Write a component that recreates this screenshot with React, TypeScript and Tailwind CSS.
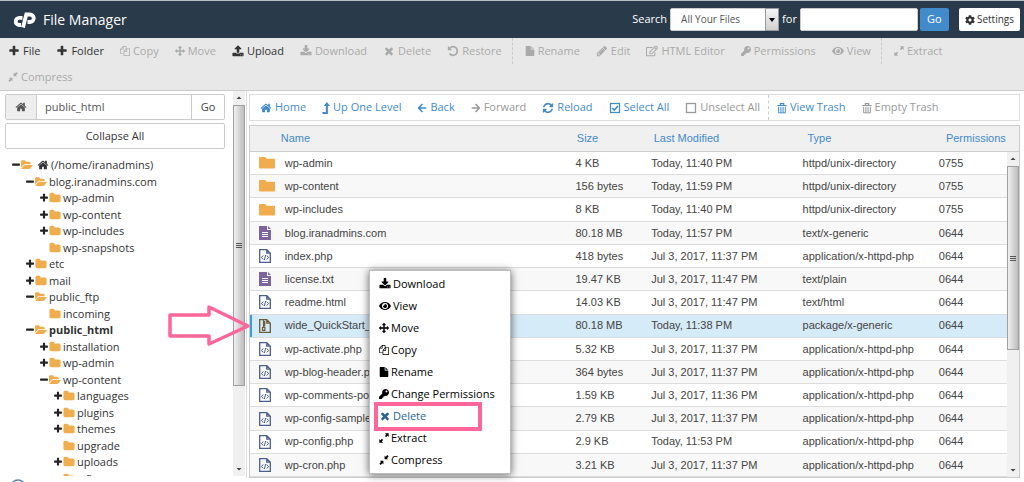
import type { ReactNode } from 'react'
import { FaArrowLeft, FaArrowRight, FaCog, FaEye, FaKey, FaRegEdit } from 'react-icons/fa'

const paths = {
  plus: 'M1600 736v192q0 40-28 68t-68 28h-416v416q0 40-28 68t-68 28h-192q-40 0-68-28t-28-68v-416h-416q-40 0-68-28t-28-68v-192q0-40 28-68t68-28h416v-416q0-40 28-68t68-28h192q40 0 68 28t28 68v416h416q40 0 68 28t28 68z',
  minus: 'M1600 736v192q0 40-28 68t-68 28h-1216q-40 0-68-28t-28-68v-192q0-40 28-68t68-28h1216q40 0 68 28t28 68z',
  home: 'M1472 992v480q0 26-19 45t-45 19h-384v-384h-256v384h-384q-26 0-45-19t-19-45v-480q0-1 .5-3t.5-3l575-474 575 474q1 2 1 6zm223-69l-62 74q-8 9-21 11h-3q-13 0-21-7l-692-577-692 577q-12 8-24 7-13-2-21-11l-62-74q-8-10-7-23.5t11-21.5l719-599q32-26 76-26t76 26l244 204v-195q0-14 9-23t23-9h192q14 0 23 9t9 23v408l219 182q10 8 11 21.5t-7 23.5z',
  download: 'M1344 1344q0-26-19-45t-45-19-45 19-19 45 19 45 45 19 45-19 19-45zm256 0q0-26-19-45t-45-19-45 19-19 45 19 45 45 19 45-19 19-45zm128-224v320q0 40-28 68t-68 28h-1472q-40 0-68-28t-28-68v-320q0-40 28-68t68-28h465l135 136q58 56 136 56t136-56l136-136h464q40 0 68 28t28 68zm-325-569q17 41-14 70l-448 448q-18 19-45 19t-45-19l-448-448q-31-29-14-70 17-39 59-39h256v-448q0-26 19-45t45-19h256q26 0 45 19t19 45v448h256q42 0 59 39z',
  upload: 'M1344 1472q0-26-19-45t-45-19-45 19-19 45 19 45 45 19 45-19 19-45zm256 0q0-26-19-45t-45-19-45 19-19 45 19 45 45 19 45-19 19-45zm128-224v320q0 40-28 68t-68 28h-1472q-40 0-68-28t-28-68v-320q0-40 28-68t68-28h427q21 56 70.5 92t110.5 36h256q61 0 110.5-36t70.5-92h427q40 0 68 28t28 68zm-325-648q-17 40-59 40h-256v448q0 26-19 45t-45 19h-256q-26 0-45-19t-19-45v-448h-256q-42 0-59-40-17-39 14-69l448-448q18-19 45-19t45 19l448 448q31 30 14 69z',
  times: 'M1490 1322q0 40-28 68l-136 136q-28 28-68 28t-68-28l-294-294-294 294q-28 28-68 28t-68-28l-136-136q-28-28-28-68t28-68l294-294-294-294q-28-28-28-68t28-68l136-136q28-28 68-28t68 28l294 294 294-294q28-28 68-28t68 28l136 136q28 28 28 68t-28 68l-294 294 294 294q28 28 28 68z',
  move: 'M1792 896q0 26-19 45l-256 256q-19 19-45 19t-45-19-19-45v-128h-384v384h128q26 0 45 19t19 45-19 45l-256 256q-19 19-45 19t-45-19l-256-256q-19-19-19-45t19-45 45-19h128v-384h-384v128q0 26-19 45t-45 19-45-19l-256-256q-19-19-19-45t19-45l256-256q19-19 45-19t45 19 19 45v128h384v-384h-128q-26 0-45-19t-19-45 19-45l256-256q19-19 45-19t45 19l256 256q19 19 19 45t-19 45-45 19h-128v384h384v-128q0-26 19-45t45-19 45 19l256 256q19 19 19 45z',
  copy: 'M1696 384q40 0 68 28t28 68v1216q0 40-28 68t-68 28h-960q-40 0-68-28t-28-68v-288h-544q-40 0-68-28t-28-68v-672q0-40 20-88t48-76l408-408q28-28 76-48t88-20h416q40 0 68 28t28 68v328q68-40 128-40h416zm-544 213l-299 299h299v-299zm-640-384l-299 299h299v-299zm196 647l316-316v-416h-384v416q0 40-28 68t-68 28h-416v640h512v-256q0-40 20-88t48-76zm956 804v-1152h-384v416q0 40-28 68t-68 28h-416v640h896z',
  folder: 'M1728 608v704q0 92-66 158t-158 66h-1216q-92 0-158-66t-66-158v-960q0-92 66-158t158-66h320q92 0 158 66t66 158v32h672q92 0 158 66t66 158z',
  folderOpen: 'M1879 952q0 31-31 66l-336 396q-43 51-120.5 86.5t-143.5 35.5h-1088q-34 0-60.5-13t-26.5-43q0-31 31-66l336-396q43-51 120.5-86.5t143.5-35.5h1088q34 0 60.5 13t26.5 43zm-343-344v160h-832q-94 0-197 47.5t-164 119.5l-337 396-5 6q0-4-.5-12.5t-.5-12.5v-960q0-92 66-158t158-66h320q92 0 158 66t66 158v32h544q92 0 158 66t66 158z',
  undo: 'M1664 896q0 156-61 298t-164 245-245 164-298 61q-172 0-327-72.5t-264-204.5q-7-10-6.5-22.5t8.5-20.5l137-138q10-9 25-9 16 2 23 12 73 95 179 147t225 52q104 0 198.5-40.5t163.5-109.5 109.5-163.5 40.5-198.5-40.5-198.5-109.5-163.5-163.5-109.5-198.5-40.5q-98 0-188 35.5t-160 101.5l137 138q31 30 14 69-17 40-59 40h-448q-26 0-45-19t-19-45v-448q0-42 40-59 39-17 69 14l130 129q107-101 244.5-156.5t284.5-55.5q156 0 298 61t245 164 164 245 61 298z',
  file: 'M1152 512v-472q22 14 36 28l408 408q14 14 28 36h-472zm-128 32q0 40 28 68t68 28h544v1056q0 40-28 68t-68 28h-1344q-40 0-68-28t-28-68v-1600q0-40 28-68t68-28h800v544z',
  pencil: 'M491 1536l91-91-235-235-91 91v107h128v128h107zm523-928q0-22-22-22-10 0-17 7l-542 542q-7 7-7 17 0 22 22 22 10 0 17-7l542-542q7-7 7-17zm-54-192l416 416-832 832h-416v-416zm683 96q0 53-37 90l-166 166-416-416 166-165q36-38 90-38 53 0 91 38l235 234q37 39 37 91z',
  refresh: 'M1639 1056q0 5-1 7-64 268-268 434.5t-478 166.5q-146 0-282.5-55t-243.5-157l-129 129q-19 19-45 19t-45-19-19-45v-448q0-26 19-45t45-19h448q26 0 45 19t19 45-19 45l-137 137q71 66 161 102t187 36q134 0 250-65t186-179q11-17 53-117 8-23 30-23h192q13 0 22.5 9.5t9.5 22.5zm25-800v448q0 26-19 45t-45 19h-448q-26 0-45-19t-19-45 19-45l138-138q-148-137-349-137-134 0-250 65t-186 179q-11 17-53 117-8 23-30 23h-199q-13 0-22.5-9.5t-9.5-22.5v-7q65-268 270-434.5t480-166.5q146 0 284 55.5t245 156.5l130-129q19-19 45-19t45 19 19 45z',
  extract: 'M1060 60h672v672l-230-230-240 240-210-210 240-240zM60 1732v-672l230 230 240-240 210 210-240 240 232 232z',
  compress: 'M1732 250l-310 310 220 220h-640v-640l190 190 310-310zM60 1542l310-310-220-220h640v640l-190-190-310 310z',
}

type IconName = keyof typeof paths

function Icon({ name, className = 'size-3' }: { name: IconName; className?: string }) {
  return (
    <svg viewBox={name === 'folderOpen' ? '0 0 1920 1792' : '0 0 1792 1792'} fill="currentColor" className={`shrink-0 ${className}`} aria-hidden="true">
      <path d={paths[name]} />
    </svg>
  )
}

function LevelUp() {
  return (
    <svg viewBox="0 0 8 12" className="h-3 w-2 shrink-0" fill="currentColor" aria-hidden="true">
      <path d="M4.8 0 8 4H5.9v8H.9L0 10h3.8V4H1.700z" />
    </svg>
  )
}

function Box({ checked = false }: { checked?: boolean }) {
  return (
    <svg viewBox="0 0 12 12" className="size-3 shrink-0" fill="none" stroke="currentColor" strokeWidth="1.3" aria-hidden="true">
      <rect x="1.500" y="1.500" width="9" height="9" />
      {checked && <path d="M3.300 6 5.300 8 9 4" strokeWidth="1.600" />}
    </svg>
  )
}

function Trash() {
  return (
    <svg viewBox="0 0 12 13" className="h-3.5 w-2.5 shrink-0" fill="none" stroke="currentColor" aria-hidden="true">
      <path d="M.5 3.500h11M4 3V1.300h4V3" strokeWidth="1.400" />
      <path d="M2 5v7.300h8V5M4.700 5v7M7.300 5v7" strokeWidth="1.200" />
    </svg>
  )
}

const tools: { label: string; icon: ReactNode; active?: boolean; divider?: boolean }[] = [
  { label: 'File', icon: <Icon name="plus" />, active: true },
  { label: 'Folder', icon: <Icon name="plus" />, active: true },
  { label: 'Copy', icon: <Icon name="copy" className="size-2.5" /> },
  { label: 'Move', icon: <Icon name="move" className="size-2.5" /> },
  { label: 'Upload', icon: <Icon name="upload" />, active: true },
  { label: 'Download', icon: <Icon name="download" /> },
  { label: 'Delete', icon: <Icon name="times" /> },
  { label: 'Restore', icon: <Icon name="undo" /> },
  { label: 'Rename', icon: <Icon name="file" className="size-2.5" />, divider: true },
  { label: 'Edit', icon: <Icon name="pencil" /> },
  { label: 'HTML Editor', icon: <FaRegEdit className="size-3" /> },
  { label: 'Permissions', icon: <FaKey className="size-2.5" /> },
  { label: 'View', icon: <FaEye className="size-3" /> },
  { label: 'Extract', icon: <Icon name="extract" className="size-2.5" />, divider: true },
  { label: 'Compress', icon: <Icon name="compress" className="size-2.5" /> },
]

const actions: { label: string; icon: ReactNode; disabled?: boolean; divider?: boolean }[] = [
  { label: 'Home', icon: <Icon name="home" /> },
  { label: 'Up One Level', icon: <LevelUp /> },
  { label: 'Back', icon: <FaArrowLeft className="size-2.5" /> },
  { label: 'Forward', icon: <FaArrowRight className="size-2.5" />, disabled: true },
  { label: 'Reload', icon: <Icon name="refresh" /> },
  { label: 'Select All', icon: <Box checked /> },
  { label: 'Unselect All', icon: <Box />, disabled: true },
  { label: 'View Trash', icon: <Trash />, divider: true },
  { label: 'Empty Trash', icon: <Trash />, disabled: true },
]

const tree: { name: string; level: number; state: 'open' | 'closed' | 'leaf'; home?: boolean; current?: boolean }[] = [
  { name: '(/home/iranadmins)', level: 0, state: 'open', home: true },
  { name: 'blog.iranadmins.com', level: 1, state: 'open' },
  { name: 'wp-admin', level: 2, state: 'closed' },
  { name: 'wp-content', level: 2, state: 'closed' },
  { name: 'wp-includes', level: 2, state: 'closed' },
  { name: 'wp-snapshots', level: 2, state: 'leaf' },
  { name: 'etc', level: 1, state: 'closed' },
  { name: 'mail', level: 1, state: 'closed' },
  { name: 'public_ftp', level: 1, state: 'open' },
  { name: 'incoming', level: 2, state: 'leaf' },
  { name: 'public_html', level: 1, state: 'open', current: true },
  { name: 'installation', level: 2, state: 'closed' },
  { name: 'wp-admin', level: 2, state: 'closed' },
  { name: 'wp-content', level: 2, state: 'open' },
  { name: 'languages', level: 3, state: 'closed' },
  { name: 'plugins', level: 3, state: 'closed' },
  { name: 'themes', level: 3, state: 'closed' },
  { name: 'upgrade', level: 3, state: 'leaf' },
  { name: 'uploads', level: 3, state: 'closed' },
  { name: 'wflogs', level: 3, state: 'leaf' },
]

const indents = ['pl-1.5', 'pl-5', 'pl-8.5', 'pl-12']

type Kind = 'dir' | 'text' | 'code' | 'zip'

const files: [Kind, string, string, string, string, string][] = [
  ['dir', 'wp-admin', '4 KB', 'Today, 11:40 PM', 'httpd/unix-directory', '0755'],
  ['dir', 'wp-content', '156 bytes', 'Today, 11:59 PM', 'httpd/unix-directory', '0755'],
  ['dir', 'wp-includes', '8 KB', 'Today, 11:40 PM', 'httpd/unix-directory', '0755'],
  ['text', 'blog.iranadmins.com', '80.18 MB', 'Today, 11:57 PM', 'text/x-generic', '0644'],
  ['code', 'index.php', '418 bytes', 'Jul 3, 2017, 11:37 PM', 'application/x-httpd-php', '0644'],
  ['text', 'license.txt', '19.47 KB', 'Jul 3, 2017, 11:47 PM', 'text/plain', '0644'],
  ['code', 'readme.html', '14.03 KB', 'Jul 3, 2017, 11:47 PM', 'text/html', '0644'],
  ['zip', 'wide_QuickStart_', '80.18 MB', 'Today, 11:38 PM', 'package/x-generic', '0644'],
  ['code', 'wp-activate.php', '5.32 KB', 'Jul 3, 2017, 11:37 PM', 'application/x-httpd-php', '0644'],
  ['code', 'wp-blog-header.php', '364 bytes', 'Jul 3, 2017, 11:37 PM', 'application/x-httpd-php', '0644'],
  ['code', 'wp-comments-post.php', '1.59 KB', 'Jul 3, 2017, 11:36 PM', 'application/x-httpd-php', '0644'],
  ['code', 'wp-config-sample.php', '2.79 KB', 'Jul 3, 2017, 11:37 PM', 'application/x-httpd-php', '0644'],
  ['code', 'wp-config.php', '2.9 KB', 'Today, 11:53 PM', 'application/x-httpd-php', '0644'],
  ['code', 'wp-cron.php', '3.21 KB', 'Jul 3, 2017, 11:37 PM', 'application/x-httpd-php', '0644'],
]

const menu: { label: string; icon: ReactNode; hot?: boolean }[] = [
  { label: 'Download', icon: <Icon name="download" /> },
  { label: 'View', icon: <FaEye className="size-3" /> },
  { label: 'Move', icon: <Icon name="move" className="size-2.5" /> },
  { label: 'Copy', icon: <Icon name="copy" className="size-2.5" /> },
  { label: 'Rename', icon: <Icon name="file" className="size-2.5" /> },
  { label: 'Change Permissions', icon: <FaKey className="size-2.5" /> },
  { label: 'Delete', icon: <Icon name="times" />, hot: true },
  { label: 'Extract', icon: <Icon name="extract" className="size-2.5" /> },
  { label: 'Compress', icon: <Icon name="compress" className="size-2.5" /> },
]

function FileIcon({ kind }: { kind: Kind }) {
  if (kind === 'dir') {
    return (
      <svg viewBox="0 0 16 12" className="h-3 w-4 text-[#f0ad4e]" fill="currentColor" aria-hidden="true">
        <path d="M.8 0h5.400l1.500 1.700h7.500q.8 0 .8.800v8.200q0 .8-.8.800H.8q-.8 0-.8-.8V.8Q0 0 .8 0z" />
      </svg>
    )
  }
  if (kind === 'text') {
    return (
      <svg viewBox="0 0 12 14" className="h-3.5 w-3" aria-hidden="true">
        <path d="M0 0h8v4h4v10H0zM9 0l3 3H9z" fill="#7b64a0" />
        <path d="M3 6.500h6M3 8.500h6M3 10.500h6" stroke="#fff" />
      </svg>
    )
  }
  return (
    <svg viewBox="0 0 12 14" className="h-3.5 w-3" fill="none" stroke={kind === 'zip' ? '#6b5b3a' : '#4a5f8c'} aria-hidden="true">
      <path d="M.7.7h7.100l3.500 3.500v9.100H.7zM7.800.7v3.500h3.500" strokeWidth="1.300" />
      {kind === 'zip' ? (
        <path d="M4.500 1v7M3.500 8.500h2.400v2.800H3.500zM5.700 2v5.500" strokeWidth="1.200" />
      ) : (
        <path d="M4.200 6.500 2.500 8.500l1.700 2M7.800 6.500l1.700 2-1.700 2M6.600 6l-1.200 5" />
      )}
    </svg>
  )
}

function Scrollbar({ thumb }: { thumb: string }) {
  return (
    <div className="flex w-3 shrink-0 flex-col bg-[#f0f0f0]" aria-hidden="true">
      <svg viewBox="0 0 12 14" className="h-3.5 w-3" fill="#444">
        <path d="M3.500 8 6 5.500 8.500 8z" />
      </svg>
      <div className="min-h-0 flex-1">
        <div className={`flex items-center justify-center border border-[#a0a0a0] bg-linear-to-r from-[#f0f0f0] to-[#bdbdc0] ${thumb}`}>
          <svg viewBox="0 0 6 7" className="h-[7px] w-1.5" stroke="#555">
            <path d="M0 1.500h6M0 3.500h6M0 5.500h6" />
          </svg>
        </div>
      </div>
      <svg viewBox="0 0 12 14" className="h-3.5 w-3" fill="#444">
        <path d="M3.500 6 6 8.500 8.500 6z" />
      </svg>
    </div>
  )
}

function Header() {
  return (
    <header className="flex items-center border-t border-[#b5bcc2] bg-[#293a4a] pr-1 pl-3 text-[11px] text-white">
      <svg viewBox="0 0 24 18" className="mr-[7px] h-[18px] w-6" fill="none" stroke="#fff" strokeWidth="3.800" aria-hidden="true">
        <path d="M10.500 6.800H7.300a3.600 3.600 0 0 0 0 7.200h1.700" />
        <path d="M11 16.500 14.300 3.500h3.700a3.600 3.600 0 0 1 0 7.500h-2.500" />
      </svg>
      <h1 className="flex-1 text-sm">File Manager</h1>
      <form className="flex items-center py-[7px]" onSubmit={(e) => e.preventDefault()}>
        <label htmlFor="scope" className="mr-[3px]">Search</label>
        <div className="relative">
          <select id="scope" className="h-[23px] w-[109px] appearance-none rounded-xs border border-[#ccc] bg-white pl-2.5 text-[10px] text-[#555]">
            <option>All Your Files</option>
          </select>
          <span className="pointer-events-none absolute inset-y-0 right-0 flex w-3.5 items-center justify-center border border-[#999] bg-linear-to-b from-[#f4f4f4] to-[#d0d0d0]">
            <svg viewBox="0 0 6 4" className="h-1 w-1.5" fill="#000"><path d="M0 0h6L3 4z" /></svg>
          </span>
        </div>
        <label htmlFor="query" className="mx-[3px]">for</label>
        <input id="query" type="text" className="h-[23px] w-[118px] rounded-xs border border-[#ccc] bg-white px-2 text-[#555]" />
        <button type="submit" className="ml-0.5 h-[23px] w-[29px] rounded-xs bg-[#428bca]">Go</button>
        <button type="button" className="ml-2.5 flex h-[23px] items-center gap-0.5 rounded-xs bg-white px-1.5 text-[10px] text-[#333]">
          <FaCog className="size-2.5" />
          Settings
        </button>
      </form>
    </header>
  )
}

function Toolbar() {
  return (
    <nav className="flex flex-wrap border-b border-[#ccc] bg-[#e8e8e8] text-[11px] leading-[26px]">
      {tools.map((tool) => (
        <button
          key={tool.label}
          type="button"
          disabled={!tool.active}
          className={`flex items-center gap-[3px] px-2 ${tool.active ? 'text-[#333]' : 'text-[#aaa]'} ${tool.divider ? 'ml-0.5 border-l border-dashed border-[#ccc] pl-3' : ''}`}
        >
          {tool.icon}
          {tool.label}
        </button>
      ))}
    </nav>
  )
}

function Sidebar() {
  return (
    <aside className="flex w-[247px] shrink-0 border-r border-[#ddd] pr-px pb-0.5">
      <div className="flex min-w-0 flex-1 flex-col pt-[3px] pr-2 pl-[5px]">
        <form className="flex h-[26px] shrink-0 rounded-xs border border-[#ccc] text-[11px] text-[#444]" onSubmit={(e) => e.preventDefault()}>
          <button type="button" aria-label="Home" className="flex w-[31px] items-center justify-center border-r border-[#ccc] bg-[#eee] text-[#555]">
            <Icon name="home" />
          </button>
          <input aria-label="Path" defaultValue="public_html" className="min-w-0 flex-1 px-2 text-[#555]" />
          <button type="submit" className="w-[33px] border-l border-[#ccc]">Go</button>
        </form>
        <button type="button" className="mt-[3px] h-[26px] shrink-0 rounded-xs border border-[#ccc] text-[11px] text-[#333]">Collapse All</button>
        <ul className="mt-2 min-h-0 flex-1 overflow-hidden text-[11px] leading-normal text-[#333]">
          {tree.map((node, i) => (
            <li key={i} className={indents[node.level]}>
              <a href="#" className={`flex items-center ${node.current ? 'font-bold' : ''}`}>
                <span className="flex w-2.5 shrink-0 text-[#222]">
                  {node.state !== 'leaf' && <Icon name={node.state === 'open' ? 'minus' : 'plus'} className="size-2.5" />}
                </span>
                <Icon name={node.state === 'open' ? 'folderOpen' : 'folder'} className="mr-0.5 h-3 w-3 text-[#f0ad4e]" />
                {node.home && <Icon name="home" className="mx-0.5 size-3" />}
                {node.name}
              </a>
            </li>
          ))}
        </ul>
      </div>
      <Scrollbar thumb="h-[281px]" />
    </aside>
  )
}

function FileTable() {
  return (
    <div className="relative flex min-h-0 flex-1 border border-[#ccc]">
      <table className="flex min-w-0 flex-1 flex-col font-['Liberation_Sans',Arial,sans-serif] text-[11px] text-[#444]">
        <thead className="block">
          <tr className="grid h-[26px] grid-cols-[4%_38.5%_10%_20%_18%_9.5%] items-center border-b border-[#ccc] bg-[#f0f0f0] text-left text-[#428bca]">
            <th aria-label="Kind" />
            <th className="font-normal">Name</th>
            <th className="font-normal">Size</th>
            <th className="font-normal">Last Modified</th>
            <th className="font-normal">Type</th>
            <th className="font-normal">Permissions</th>
          </tr>
        </thead>
        <tbody className="mr-3 flex min-h-0 flex-1 flex-col">
          {files.map(([kind, name, size, modified, type, mode]) => (
            <tr
              key={name}
              className={`grid flex-1 grid-cols-[4.6%_38.4%_10%_20%_18%_9%] items-center border-b border-[#ddd] ${
                kind === 'zip' ? 'bg-[#d6ebf8] shadow-[inset_2px_0_#3b9fd6]' : 'odd:bg-white even:bg-[#f8f8f8]'
              }`}
            >
              <td className="pl-[9px]"><FileIcon kind={kind} /></td>
              <td>{name}</td>
              <td>{size}</td>
              <td>{modified}</td>
              <td>{type}</td>
              <td>{mode}</td>
            </tr>
          ))}
        </tbody>
      </table>
      <div className="absolute top-[26px] right-0 bottom-0 flex">
        <Scrollbar thumb="h-[184px]" />
      </div>
    </div>
  )
}

function ContextMenu() {
  return (
    <div role="menu" className="absolute top-[270px] left-[369px] w-[142px] border border-[#bbb] bg-white py-0.5 text-[11px] leading-[22px] text-black shadow-[0_1px_8px_rgba(0,0,0,0.6)]">
      {menu.map((item) => (
        <button key={item.label} type="button" role="menuitem" className={`flex w-full items-center gap-0.5 pl-[9px] ${item.hot ? 'text-[#2a6496]' : ''}`}>
          {item.icon}
          {item.label}
        </button>
      ))}
    </div>
  )
}

export default function App() {
  return (
    <div className="relative flex h-screen flex-col overflow-hidden bg-white font-['Open_Sans',sans-serif]">
      <Header />
      <Toolbar />
      <main className="flex min-h-0 flex-1 pb-1">
        <Sidebar />
        <section className="flex min-w-0 flex-1 flex-col gap-1 pt-[3px] pr-1 pl-0.5">
          <div className="flex h-[27px] shrink-0 border border-[#ddd] pl-0.5 text-[11px]">
            {actions.map((action) => (
              <button
                key={action.label}
                type="button"
                disabled={action.disabled}
                className={`flex items-center gap-[3px] px-2 ${action.disabled ? 'text-[#999]' : 'text-[#428bca]'} ${action.divider ? 'border-l border-dashed border-[#ccc]' : ''}`}
              >
                {action.icon}
                {action.label}
              </button>
            ))}
          </div>
          <FileTable />
        </section>
      </main>

      <ContextMenu />

      {/* Callouts */}
      <div className="pointer-events-none absolute top-[402px] left-[374px] h-[29px] w-[108px] border-4 border-[#ff6699]" />
      <svg viewBox="0 0 84 44" className="pointer-events-none absolute top-[304px] left-[167px] h-11 w-[84px]" fill="none" stroke="#ff6699" strokeWidth="3.500" aria-hidden="true">
        <path d="M3 11h39V3l39 19-39 18v-8H3z" strokeLinejoin="round" />
      </svg>
      <svg viewBox="0 0 16 16" className="pointer-events-none absolute top-[479px] left-2.5 size-4" fill="none" stroke="#5b83a8" strokeWidth="1.500" aria-hidden="true">
        <circle cx="8" cy="8" r="7" />
      </svg>
    </div>
  )
}
